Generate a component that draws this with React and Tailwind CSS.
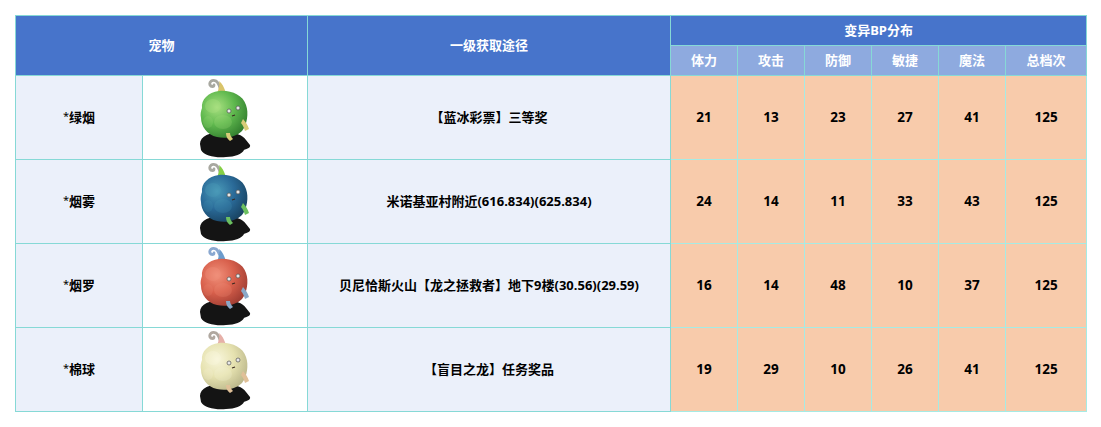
import React from "react";

const B = "border border-[#86d9d6]";

function Creature({ body, light, dark, stem, curl, limb }) {
  const id = body.replace("#", "");
  return (
    <svg width="52" height="80" viewBox="0 0 52 80" className="mx-auto block">
      <defs>
        <radialGradient id={"g" + id} cx="0.35" cy="0.35" r="0.75">
          <stop offset="0" stopColor={light} />
          <stop offset="0.5" stopColor={body} />
          <stop offset="1" stopColor={dark} />
        </radialGradient>
      </defs>
      <path d="M1 66 C1 58 11 54 24 54 C36 54 44 57 47 62 L51 67 C52 70 47 71 45 72 C43 76 36 79 27 79 C17 80 5 78 2 72 Z" fill="#141414" />
      <path d="M22 14 C21 9 20 5 17 3 C13 1 10 4 11 7 C12 9 15 9 15 7" fill="none" stroke={curl} strokeWidth="2.8" strokeLinecap="round" />
      <path d="M18 16 C20 10 21 6 20 3 C23 5 25 9 27 15 C25 17 21 17 18 16 Z" fill={stem} />
      <path d="M3 30 C2 22 9 14 20 13 C32 12 44 17 47 27 C50 35 48 47 43 53 C37 59 27 61 18 59 C8 57 2 48 2 40 C1 36 2 33 3 30 Z" fill={"url(#g" + id + ")"} />
      <ellipse cx="14" cy="28" rx="8" ry="7" fill={light} opacity="0.35" />
      <ellipse cx="24" cy="44" rx="9" ry="7" fill={light} opacity="0.22" />
      <ellipse cx="9" cy="44" rx="5" ry="6" fill={light} opacity="0.18" />
      <circle cx="30" cy="33" r="2" fill="#e8e8e8" stroke="#555" strokeWidth="0.7" />
      <circle cx="39" cy="30" r="2" fill="#e8e8e8" stroke="#555" strokeWidth="0.7" />
      <path d="M33 38 L36 37" stroke="#3a2a20" strokeWidth="1.1" />
      <path d="M44 41 C47 44 49 48 50 51 L46 53 C45 50 44 47 42 45 Z" fill={limb} />
      <path d="M27 55 C27 58 28 61 31 63 L34 61 C32 59 31 57 31 55 Z" fill={limb} />
    </svg>
  );
}

const rows = [
  {
    name: "*绿烟",
    src: "【蓝冰彩票】三等奖",
    v: [21, 13, 23, 27, 41, 125],
    c: { body: "#5fb84e", light: "#a8e080", dark: "#2f7a2c", stem: "#d9c46a", curl: "#a8a8a0", limb: "#d8cc78" },
  },
  {
    name: "*烟雾",
    src: "米诺基亚村附近(616.834)(625.834)",
    v: [24, 14, 11, 33, 43, 125],
    c: { body: "#2a6a98", light: "#4a9ab8", dark: "#17405e", stem: "#86cf46", curl: "#a8a8a0", limb: "#6cc060" },
  },
  {
    name: "*烟罗",
    src: "贝尼恰斯火山【龙之拯救者】地下9楼(30.56)(29.59)",
    v: [16, 14, 48, 10, 37, 125],
    c: { body: "#d8604c", light: "#f0907a", dark: "#9a3a30", stem: "#6c9ccc", curl: "#8aa8d0", limb: "#8aa8c8" },
  },
  {
    name: "*棉球",
    src: "【盲目之龙】任务奖品",
    v: [19, 29, 10, 26, 41, 125],
    c: { body: "#e6e2b0", light: "#f8f6dc", dark: "#b8b488", stem: "#e6b0a8", curl: "#b0a8a0", limb: "#e0c098" },
  },
];

const stats = ["体力", "攻击", "防御", "敏捷", "魔法", "总档次"];

export default function App() {
  return (
    <div
      className="w-[1101px] h-[427px] bg-white pt-[15px] pl-[15px]"
      style={{ fontFamily: '"Noto Sans","Noto Sans CJK SC",sans-serif' }}
    >
      <table className="table-fixed border-collapse w-[1071px] text-[13px] font-bold">
        <colgroup>
          <col className="w-[127px]" />
          <col className="w-[165px]" />
          <col className="w-[363px]" />
          <col className="w-[67px]" />
          <col className="w-[67px]" />
          <col className="w-[67px]" />
          <col className="w-[67px]" />
          <col className="w-[67px]" />
          <col className="w-[81px]" />
        </colgroup>
        <thead>
          <tr className="h-[30px]">
            <th colSpan={2} rowSpan={2} className={`${B} bg-[#4774cb] text-white font-bold`}>
              宠物
            </th>
            <th rowSpan={2} className={`${B} bg-[#4774cb] text-white font-bold`}>
              一级获取途径
            </th>
            <th colSpan={6} className={`${B} bg-[#4774cb] text-white font-bold`}>
              变异BP分布
            </th>
          </tr>
          <tr className="h-[30px]">
            {stats.map((s) => (
              <th key={s} className={`${B} bg-[#8eaadf] text-white font-bold`}>
                {s}
              </th>
            ))}
          </tr>
        </thead>
        <tbody>
          {rows.map((r) => (
            <tr key={r.name} className="h-[84px]">
              <td className={`${B} bg-[#ebf0fa] text-center text-black`}>
                <span className="font-normal text-[11px] align-top">*</span>
                {r.name.slice(1)}
              </td>
              <td className={`${B} bg-white p-0`}>
                <Creature {...r.c} />
              </td>
              <td className={`${B} bg-[#ebf0fa] text-center text-black`}>{r.src}</td>
              {r.v.map((n, i) => (
                <td key={i} className="border border-[#a6ebe4] bg-[#f8cbab] text-center text-black text-[13.5px]">
                  {n}
                </td>
              ))}
            </tr>
          ))}
        </tbody>
      </table>
    </div>
  );
}
